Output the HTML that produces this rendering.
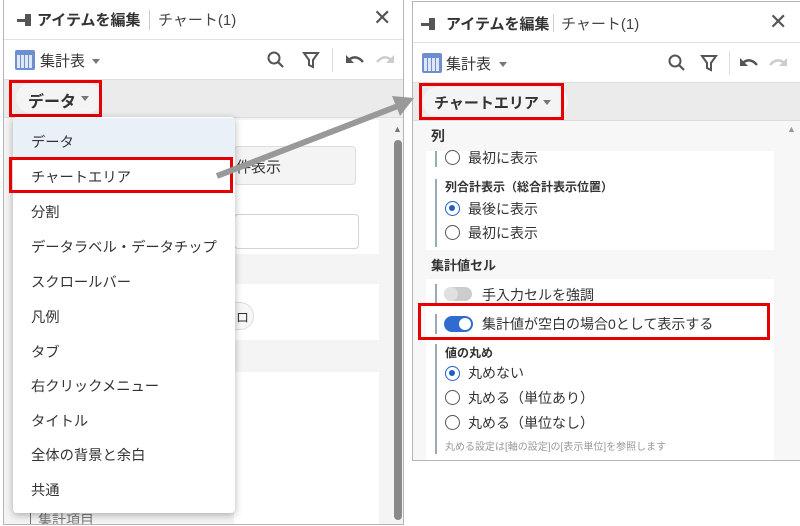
<!DOCTYPE html><html><head><meta charset="utf-8"><style>
*{box-sizing:border-box;margin:0;padding:0}
body{width:800px;height:526px;background:#fff;position:relative;overflow:hidden;font-family:"Liberation Sans","Noto Sans CJK JP",sans-serif;color:#333}
.a{position:absolute}
.panel{position:absolute;border:1px solid #b5b5b5;background:#f4f4f4;overflow:hidden}
.title{position:absolute;left:0;right:0;top:0;height:40px;background:#fff;border-bottom:1px solid #e2e2e2}
.tool{position:absolute;left:0;right:0;top:40px;height:40px;background:#fff;border-bottom:1px solid #ddd}
.band{position:absolute;left:0;right:0;top:80px;height:38px;background:#ebebeb;border-bottom:1px solid #ddd}
.t{font-size:15px;white-space:nowrap}
.red{position:absolute;border:3px solid #e60000}
.rad{position:absolute;width:15px;height:15px;border:1.5px solid #555;border-radius:50%;background:#fff}
.rad.on{border:1.5px solid #1f5fc4}
.rad.on:after{content:"";position:absolute;left:3px;top:3px;width:6px;height:6px;border-radius:50%;background:#1f5fc4}
.mi{position:absolute;left:31px;font-size:14.3px;color:#333;white-space:nowrap}
.car{position:absolute;width:0;height:0;border-left:4px solid transparent;border-right:4px solid transparent;border-top:5px solid #777}
</style></head><body>
<!-- LEFT PANEL -->
<div class="panel" style="left:3px;top:-1px;width:401px;height:526px">
 <div class="title">
  <span class="a t" style="left:33px;top:9px;font-weight:bold;color:#333">アイテムを編集</span>
  <div class="a" style="left:145px;top:10px;width:1px;height:20px;background:#ccc"></div>
  <span class="a t" style="left:154px;top:9px;color:#444">チャート(1)</span>
  <span class="a" style="left:369px;top:5px;font-size:22px;color:#555">✕</span>
  <div class="a" style="left:13px;top:19px;width:14px;height:3px;background:#555"></div>
  <div class="a" style="left:21px;top:14px;width:6px;height:12px;background:#555"></div>
 </div>
 <div class="tool">
  <div class="a" style="left:11px;top:10px;width:20px;height:20px;border-radius:2px;background:#6d8ecf"></div>
  <div class="a" style="left:13px;top:15px;width:16px;height:13px;background:repeating-linear-gradient(90deg,#dfe6f5 0 3px,#6d8ecf 3px 4px),#dfe6f5"></div>
  <span class="a t" style="left:36px;top:10px">集計表</span>
  <div class="car" style="left:88px;top:19px"></div>
  <svg class="a" style="left:262px;top:10px" width="20" height="20"><circle cx="8" cy="8" r="5.5" fill="none" stroke="#555" stroke-width="2"/><path d="M12 12l5 5" stroke="#555" stroke-width="2.2"/></svg>
  <svg class="a" style="left:298px;top:11px" width="18" height="18"><path d="M2 2h14l-5 7v7l-4-2v-5z" fill="none" stroke="#555" stroke-width="2"/></svg>
  <div class="a" style="left:328px;top:8px;width:1px;height:24px;background:#ddd"></div>
  <svg class="a" style="left:340px;top:12px" width="22" height="16"><path d="M4 9c4-5 10-5 15 1" fill="none" stroke="#555" stroke-width="2.4"/><path d="M2 3v8h8z" fill="#555"/></svg>
  <svg class="a" style="left:370px;top:12px" width="22" height="16"><path d="M18 9c-4-5-10-5-15 1" fill="none" stroke="#ccc" stroke-width="2.4"/><path d="M20 3v8h-8z" fill="#ccc"/></svg>
 </div>
 <div class="band">
  <div class="a" style="left:12px;top:3px;width:86px;height:30px;border-radius:15px;background:#f4f4f4"></div>
  <span class="a t" style="left:24px;top:8px;font-weight:bold;font-size:16px">データ</span>
  <div class="car" style="left:77px;top:16px"></div>
 </div>
 <div class="a" style="left:230px;top:120px;width:145px;height:134px;background:#fff"></div>
 <div class="a" style="left:230px;top:146px;width:122px;height:39px;border:1px solid #ddd;border-radius:4px;background:#f4f4f4"></div>
 <span class="a t" style="left:232px;top:156px">件表示</span>
 <div class="a" style="left:230px;top:214px;width:125px;height:35px;border:1px solid #ccd6dd;border-radius:4px;background:#fff"></div>
 <div class="a" style="left:230px;top:284px;width:145px;height:56px;background:#fff"></div>
 <div class="a" style="left:210px;top:302px;width:40px;height:28px;border:1px solid #ddd;border-radius:14px;background:#f7f7f7"></div>
 <span class="a" style="left:232px;top:307px;font-size:13px">ロ</span>
 <div class="a" style="left:230px;top:372px;width:145px;height:160px;background:#fff"></div>
 <div class="a" style="left:26px;top:509px;width:1px;height:20px;background:#777"></div>
 <span class="a" style="left:34px;top:510px;font-size:14px;color:#777">集計項目</span>
 <div class="a" style="left:388px;top:120px;width:12px;height:410px;background:#f4f4f4"></div>
 <span class="a" style="left:389px;top:124px;font-size:9px;color:#777">▲</span>
 <div class="a" style="left:390px;top:140px;width:8px;height:380px;border-radius:4px;background:#8a8a8a"></div>
</div>
<div class="red" style="left:9px;top:80px;width:93px;height:37px"></div>
<!-- dropdown -->
<div class="a" style="left:13px;top:117px;width:222px;height:396px;background:#fff;border-radius:4px;box-shadow:0 2px 8px rgba(0,0,0,.3)">
 <div class="a" style="left:0;top:1px;width:222px;height:40px;background:#eaf0f7"></div>
 <span class="mi" style="left:18px;top:14px">データ</span>
 <span class="mi" style="left:18px;top:49px">チャートエリア</span>
 <span class="mi" style="left:18px;top:84px">分割</span>
 <span class="mi" style="left:18px;top:119px">データラベル・データチップ</span>
 <span class="mi" style="left:18px;top:154px">スクロールバー</span>
 <span class="mi" style="left:18px;top:189px">凡例</span>
 <span class="mi" style="left:18px;top:224px">タブ</span>
 <span class="mi" style="left:18px;top:258px">右クリックメニュー</span>
 <span class="mi" style="left:18px;top:293px">タイトル</span>
 <span class="mi" style="left:18px;top:327px">全体の背景と余白</span>
 <span class="mi" style="left:18px;top:362px">共通</span>
</div>
<div class="red" style="left:9px;top:157px;width:224px;height:36px"></div>
<!-- RIGHT PANEL -->
<div class="panel" style="left:412px;top:1px;width:389px;height:460px;background:#f7f7f7">
 <div class="title" style="height:41px">
  <span class="a t" style="left:33px;top:11px;font-weight:bold">アイテムを編集</span>
  <div class="a" style="left:140px;top:12px;width:1px;height:18px;background:#ccc"></div>
  <span class="a t" style="left:148px;top:11px;color:#444">チャート(1)</span>
  <span class="a" style="left:356px;top:7px;font-size:22px;color:#555">✕</span>
  <div class="a" style="left:8px;top:21px;width:14px;height:3px;background:#555"></div>
  <div class="a" style="left:16px;top:16px;width:6px;height:12px;background:#555"></div>
 </div>
 <div class="tool" style="top:41px">
  <div class="a" style="left:9px;top:10px;width:20px;height:20px;border-radius:2px;background:#6d8ecf"></div>
  <div class="a" style="left:11px;top:15px;width:16px;height:13px;background:repeating-linear-gradient(90deg,#dfe6f5 0 3px,#6d8ecf 3px 4px),#dfe6f5"></div>
  <span class="a t" style="left:33px;top:10px">集計表</span>
  <div class="car" style="left:86px;top:19px"></div>
  <svg class="a" style="left:254px;top:10px" width="20" height="20"><circle cx="8" cy="8" r="5.5" fill="none" stroke="#555" stroke-width="2"/><path d="M12 12l5 5" stroke="#555" stroke-width="2.2"/></svg>
  <svg class="a" style="left:287px;top:11px" width="18" height="18"><path d="M2 2h14l-5 7v7l-4-2v-5z" fill="none" stroke="#555" stroke-width="2"/></svg>
  <div class="a" style="left:316px;top:8px;width:1px;height:24px;background:#ddd"></div>
  <svg class="a" style="left:325px;top:12px" width="22" height="16"><path d="M4 9c4-5 10-5 15 1" fill="none" stroke="#555" stroke-width="2.4"/><path d="M2 3v8h8z" fill="#555"/></svg>
  <svg class="a" style="left:354px;top:12px" width="22" height="16"><path d="M18 9c-4-5-10-5-15 1" fill="none" stroke="#ccc" stroke-width="2.4"/><path d="M20 3v8h-8z" fill="#ccc"/></svg>
 </div>
 <div class="band" style="top:81px">
  <div class="a" style="left:10px;top:4px;width:145px;height:30px;border-radius:15px;background:#f4f4f4"></div>
  <span class="a t" style="left:21px;top:9px;font-weight:bold;font-size:15px">チャートエリア</span>
  <div class="car" style="left:130px;top:17px"></div>
 </div>
 <span class="a" style="left:18px;top:124px;font-size:14px;font-weight:bold">列</span>
 <div class="a" style="left:13px;top:149px;width:348px;height:99px;background:#fff"></div>
 <div class="a" style="left:22px;top:149px;width:2px;height:16px;background:#9aabb8"></div>
 <div class="a" style="left:22px;top:177px;width:2px;height:68px;background:#9aabb8"></div>
 <div class="rad" style="left:32px;top:148px"></div><span class="a t" style="left:55px;top:146px;font-size:14px">最初に表示</span>
 <span class="a" style="left:32px;top:176px;font-size:12px;font-weight:bold">列合計表示（総合計表示位置）</span>
 <div class="rad on" style="left:32px;top:199px"></div><span class="a t" style="left:55px;top:197px;font-size:14px">最後に表示</span>
 <div class="rad" style="left:32px;top:223px"></div><span class="a t" style="left:55px;top:221px;font-size:14px">最初に表示</span>
 <span class="a" style="left:18px;top:253px;font-size:13px;font-weight:bold">集計値セル</span>
 <div class="a" style="left:13px;top:277px;width:348px;height:190px;background:#fff"></div>
 <div class="a" style="left:22px;top:282px;width:2px;height:20px;background:#9aabb8"></div>
 <div class="a" style="left:22px;top:312px;width:2px;height:20px;background:#9aabb8"></div>
 <div class="a" style="left:22px;top:342px;width:2px;height:110px;background:#9aabb8"></div>
 <div class="a" style="left:31px;top:285px;width:28px;height:14px;border-radius:7px;background:#ccc"></div>
 <div class="a" style="left:31px;top:285px;width:14px;height:14px;border-radius:7px;background:#e0e0e0"></div>
 <span class="a t" style="left:69px;top:283px;font-size:14px">手入力セルを強調</span>
 <div class="a" style="left:31px;top:314px;width:29px;height:16px;border-radius:8px;background:#2f6bd0"></div>
 <div class="a" style="left:46px;top:316px;width:12px;height:12px;border-radius:6px;background:#fff"></div>
 <span class="a t" style="left:69px;top:312px;font-size:14px">集計値が空白の場合0として表示する</span>
 <span class="a" style="left:32px;top:342px;font-size:12px;font-weight:bold">値の丸め</span>
 <div class="rad on" style="left:32px;top:364px"></div><span class="a t" style="left:55px;top:361px;font-size:14px">丸めない</span>
 <div class="rad" style="left:32px;top:388px"></div><span class="a t" style="left:55px;top:386px;font-size:14px">丸める（単位あり）</span>
 <div class="rad" style="left:32px;top:413px"></div><span class="a t" style="left:55px;top:411px;font-size:14px">丸める（単位なし）</span>
 <span class="a" style="left:32px;top:436px;font-size:10px;color:#999">丸める設定は[軸の設定]の[表示単位]を参照します</span>
 <span class="a" style="left:374px;top:122px;font-size:9px;color:#999">▲</span>
</div>
<div class="red" style="left:419px;top:83px;width:145px;height:37px"></div>
<div class="red" style="left:418px;top:303px;width:352px;height:37px"></div>
<!-- arrow -->
<svg class="a" style="left:0;top:0" width="800" height="526"><path d="M217 176L398 106" stroke="#999" stroke-width="6"/><path d="M414 98L392 96L400 116z" fill="#999"/></svg>
</body></html>
